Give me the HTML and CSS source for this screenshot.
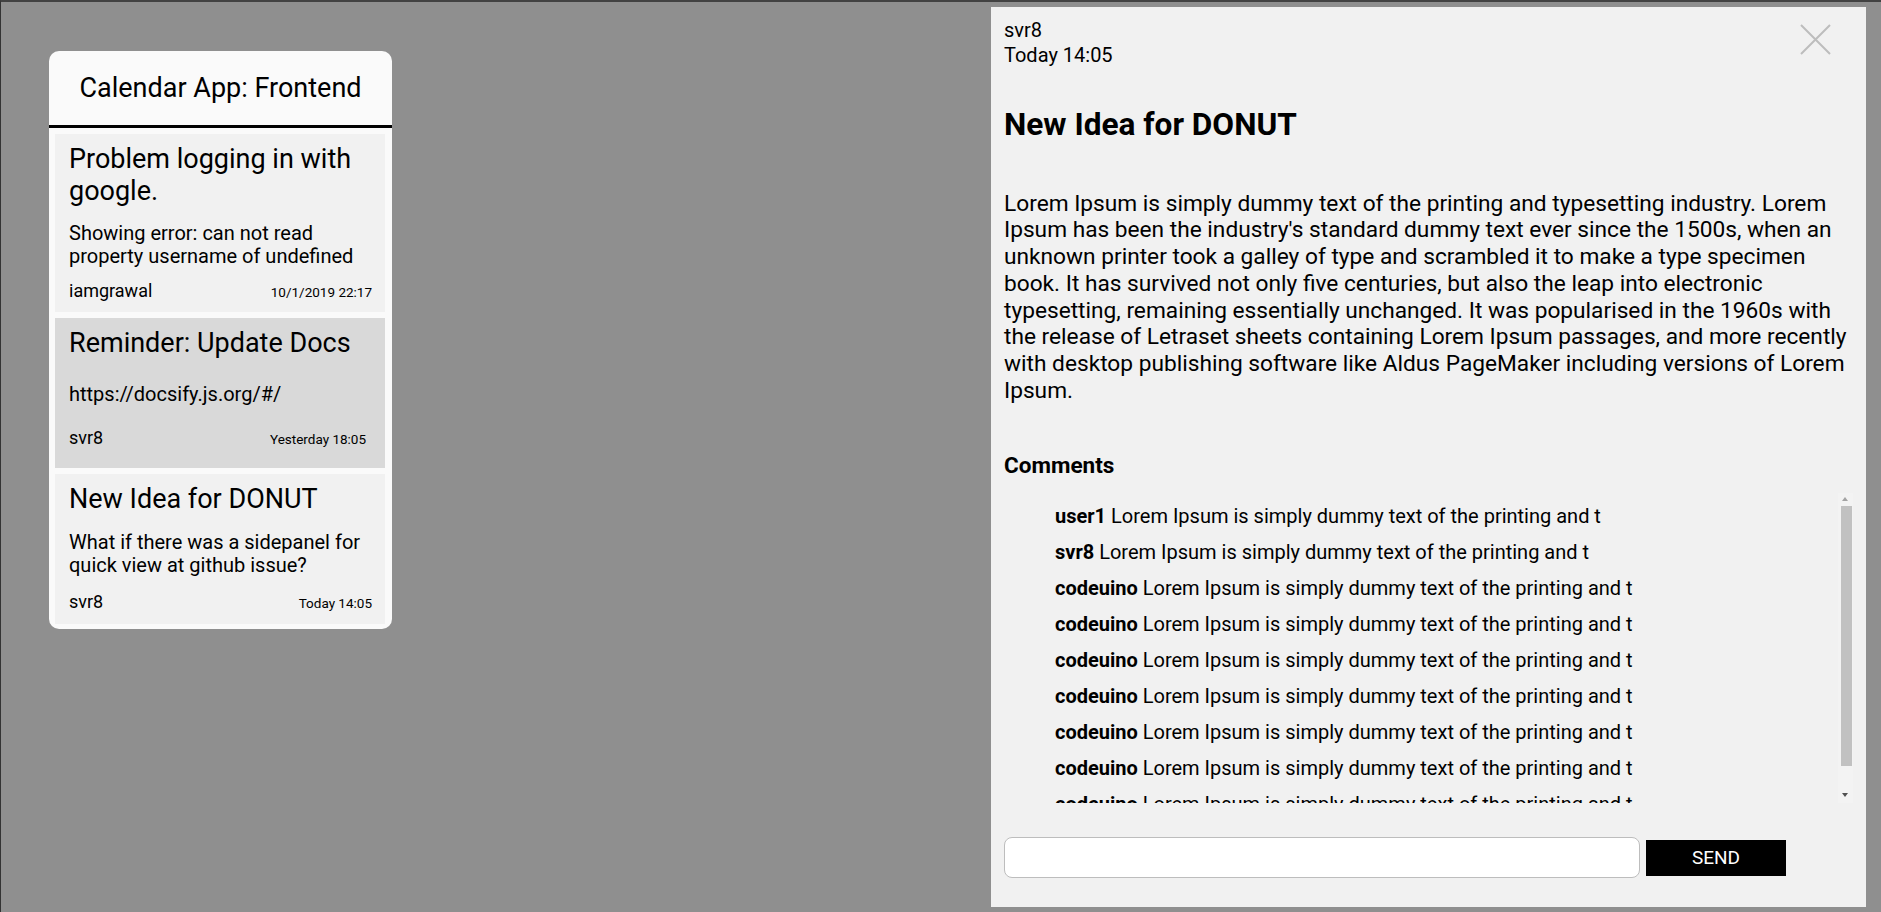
FILE: index.html
```html
<!DOCTYPE html>
<html lang="en">
<head>
<meta charset="utf-8">
<title>Calendar App: Frontend</title>
<link rel="stylesheet" href="styles.css">
</head>
<body>
<div class="app">
  <section class="board">
    <header class="board-head">Calendar App: Frontend</header>
    <div class="issues">
      <article class="issue">
        <h3 class="issue-title">Problem logging in with google.</h3>
        <p class="issue-desc">Showing error: can not read property username of undefined</p>
        <div class="issue-foot"><span class="issue-user">iamgrawal</span><span class="issue-date">10/1/2019 22:17</span></div>
      </article>
      <article class="issue issue-active">
        <h3 class="issue-title">Reminder: Update Docs</h3>
        <p class="issue-desc">https://docsify.js.org/#/</p>
        <div class="issue-foot"><span class="issue-user">svr8</span><span class="issue-date">Yesterday 18:05</span></div>
      </article>
      <article class="issue">
        <h3 class="issue-title">New Idea for DONUT</h3>
        <p class="issue-desc">What if there was a sidepanel for quick view at github issue?</p>
        <div class="issue-foot"><span class="issue-user">svr8</span><span class="issue-date">Today 14:05</span></div>
      </article>
    </div>
  </section>

  <aside class="panel">
    <button class="close" aria-label="Close">
      <svg width="31" height="31" viewBox="0 0 31 31"><path d="M1 1 L30 30 M30 1 L1 30" stroke="#bdbdbd" stroke-width="2" fill="none"/></svg>
    </button>
    <div class="panel-meta">
      <div>svr8</div>
      <div>Today 14:05</div>
    </div>
    <h1 class="panel-title">New Idea for DONUT</h1>
    <p class="panel-body">Lorem Ipsum is simply dummy text of the printing and typesetting industry. Lorem Ipsum has been the industry's standard dummy text ever since the 1500s, when an unknown printer took a galley of type and scrambled it to make a type specimen book. It has survived not only five centuries, but also the leap into electronic typesetting, remaining essentially unchanged. It was popularised in the 1960s with the release of Letraset sheets containing Lorem Ipsum passages, and more recently with desktop publishing software like Aldus PageMaker including versions of Lorem Ipsum.</p>
    <h2 class="comments-title">Comments</h2>
    <div class="comments-box">
      <ul class="comments">
        <li><b>user1</b> Lorem Ipsum is simply dummy text of the printing and t</li>
        <li><b>svr8</b> Lorem Ipsum is simply dummy text of the printing and t</li>
        <li><b>codeuino</b> Lorem Ipsum is simply dummy text of the printing and t</li>
        <li><b>codeuino</b> Lorem Ipsum is simply dummy text of the printing and t</li>
        <li><b>codeuino</b> Lorem Ipsum is simply dummy text of the printing and t</li>
        <li><b>codeuino</b> Lorem Ipsum is simply dummy text of the printing and t</li>
        <li><b>codeuino</b> Lorem Ipsum is simply dummy text of the printing and t</li>
        <li><b>codeuino</b> Lorem Ipsum is simply dummy text of the printing and t</li>
        <li><b>codeuino</b> Lorem Ipsum is simply dummy text of the printing and t</li>
        <li><b>codeuino</b> Lorem Ipsum is simply dummy text of the printing and t</li>
      </ul>
      <div class="scrollbar" aria-hidden="true">
        <div class="sb-btn"><span class="sb-up"></span></div>
        <div class="sb-thumb"></div>
        <div class="sb-fill"></div>
        <div class="sb-btn"><span class="sb-down"></span></div>
      </div>
    </div>
    <form class="reply" onsubmit="return false">
      <input class="reply-input" type="text">
      <button class="reply-send" type="button">SEND</button>
    </form>
  </aside>
</div>
</body>
</html>
```

FILE: styles.css
```css
html, body {
  margin: 0;
  padding: 0;
}
html {
  height: 912px;
  background: #8f8f8f;
}
body {
  height: 912px;
  box-sizing: border-box;
  border-top: 2px solid #424242;
  border-left: 1px solid #333333;
  background: #8f8f8f;
  font-family: Roboto, "Liberation Sans", sans-serif;
  color: #000;
  overflow: hidden;
}
.app {
  display: flex;
  justify-content: space-between;
  align-items: flex-start;
}

/* left board */
.board {
  width: 343px;
  margin: 49px 0 0 48px;
  background: #fafafa;
  border-radius: 10px;
  overflow: hidden;
}
.board-head {
  height: 74px;
  border-bottom: 3px solid #000;
  display: flex;
  align-items: center;
  justify-content: center;
  font-size: 27px;
}
.issues {
  display: flex;
  flex-direction: column;
  gap: 6px;
  padding: 6px 7px 5px 6px;
}
.issue {
  display: grid;
  min-height: 150px;
  box-sizing: border-box;
  padding: 9px 13px 10px 14px;
  background: #f1f1f1;
}
.issue-active {
  background: #d9d9d9;
}
.issue-title {
  margin: 0;
  font-size: 27px;
  line-height: 32px;
  font-weight: 400;
}
.issue-desc {
  margin: 15px 0 0;
  font-size: 20px;
  line-height: 23px;
}
.issue-foot {
  margin-top: 13px;
  display: flex;
  justify-content: space-between;
  align-items: baseline;
  line-height: 20px;
}
.issue-active .issue-foot {
  padding-right: 6px;
}
.issue-user {
  font-size: 18px;
}
.issue-date {
  font-size: 13.5px;
}

/* right panel */
.panel {
  position: relative;
  width: 875px;
  height: 900px;
  margin: 5px 15px 0 0;
  box-sizing: border-box;
  padding: 11px 13px 0;
  background: #f1f1f1;
  display: flex;
  flex-direction: column;
}
.close {
  position: absolute;
  top: 17px;
  right: 35px;
  padding: 0;
  border: 0;
  background: none;
  line-height: 0;
}
.panel-meta {
  font-size: 20px;
  line-height: 25px;
}
.panel-title {
  margin: 38px 0 0;
  font-size: 31.6px;
  line-height: 37.5px;
  font-weight: 700;
}
.panel-body {
  margin: 47px 0 0;
  font-size: 22.7px;
  line-height: 26.8px;
}
.comments-title {
  margin: 48px 0 0;
  font-size: 22.5px;
  line-height: 24.6px;
  font-weight: 700;
}
.comments-box {
  margin-top: 16px;
  height: 310px;
  display: flex;
  flex: none;
}
.comments {
  flex: 1;
  list-style: none;
  margin: 0;
  padding: 5px 0 0 51px;
  overflow: hidden;
}
.comments li {
  font-size: 20px;
  line-height: 36px;
  white-space: nowrap;
}
.comments b {
  font-weight: 700;
}
.scrollbar {
  width: 15px;
  display: flex;
  flex-direction: column;
  padding-bottom: 2px;
  box-sizing: border-box;
  background: #f3f3f3;
}
.sb-btn {
  height: 12px;
  display: flex;
  align-items: center;
  justify-content: flex-start;
  padding-left: 4px;
}
.sb-up {
  width: 0;
  height: 0;
  border-left: 3.5px solid transparent;
  border-right: 3.5px solid transparent;
  border-bottom: 4px solid #a3a3a3;
}
.sb-down {
  width: 0;
  height: 0;
  border-left: 3.5px solid transparent;
  border-right: 3.5px solid transparent;
  border-top: 4px solid #505050;
}
.sb-thumb {
  height: 260px;
  margin: 1px 1px 0 3px;
  background: #c1c1c1;
}
.sb-fill {
  flex: 1;
}
.reply {
  margin: 34px 0 0;
  display: flex;
  align-items: center;
}
.reply-input {
  width: 636px;
  height: 41px;
  box-sizing: border-box;
  margin: 0;
  border: 1px solid #bdbdbd;
  border-radius: 8px;
  background: #fff;
  font-family: Roboto, "Liberation Sans", sans-serif;
  font-size: 18px;
  padding: 0 10px;
}
.reply-send {
  width: 140px;
  height: 36px;
  margin-left: 6px;
  border: 0;
  background: #000;
  color: #fff;
  font-family: Roboto, "Liberation Sans", sans-serif;
  font-size: 19px;
}
```
